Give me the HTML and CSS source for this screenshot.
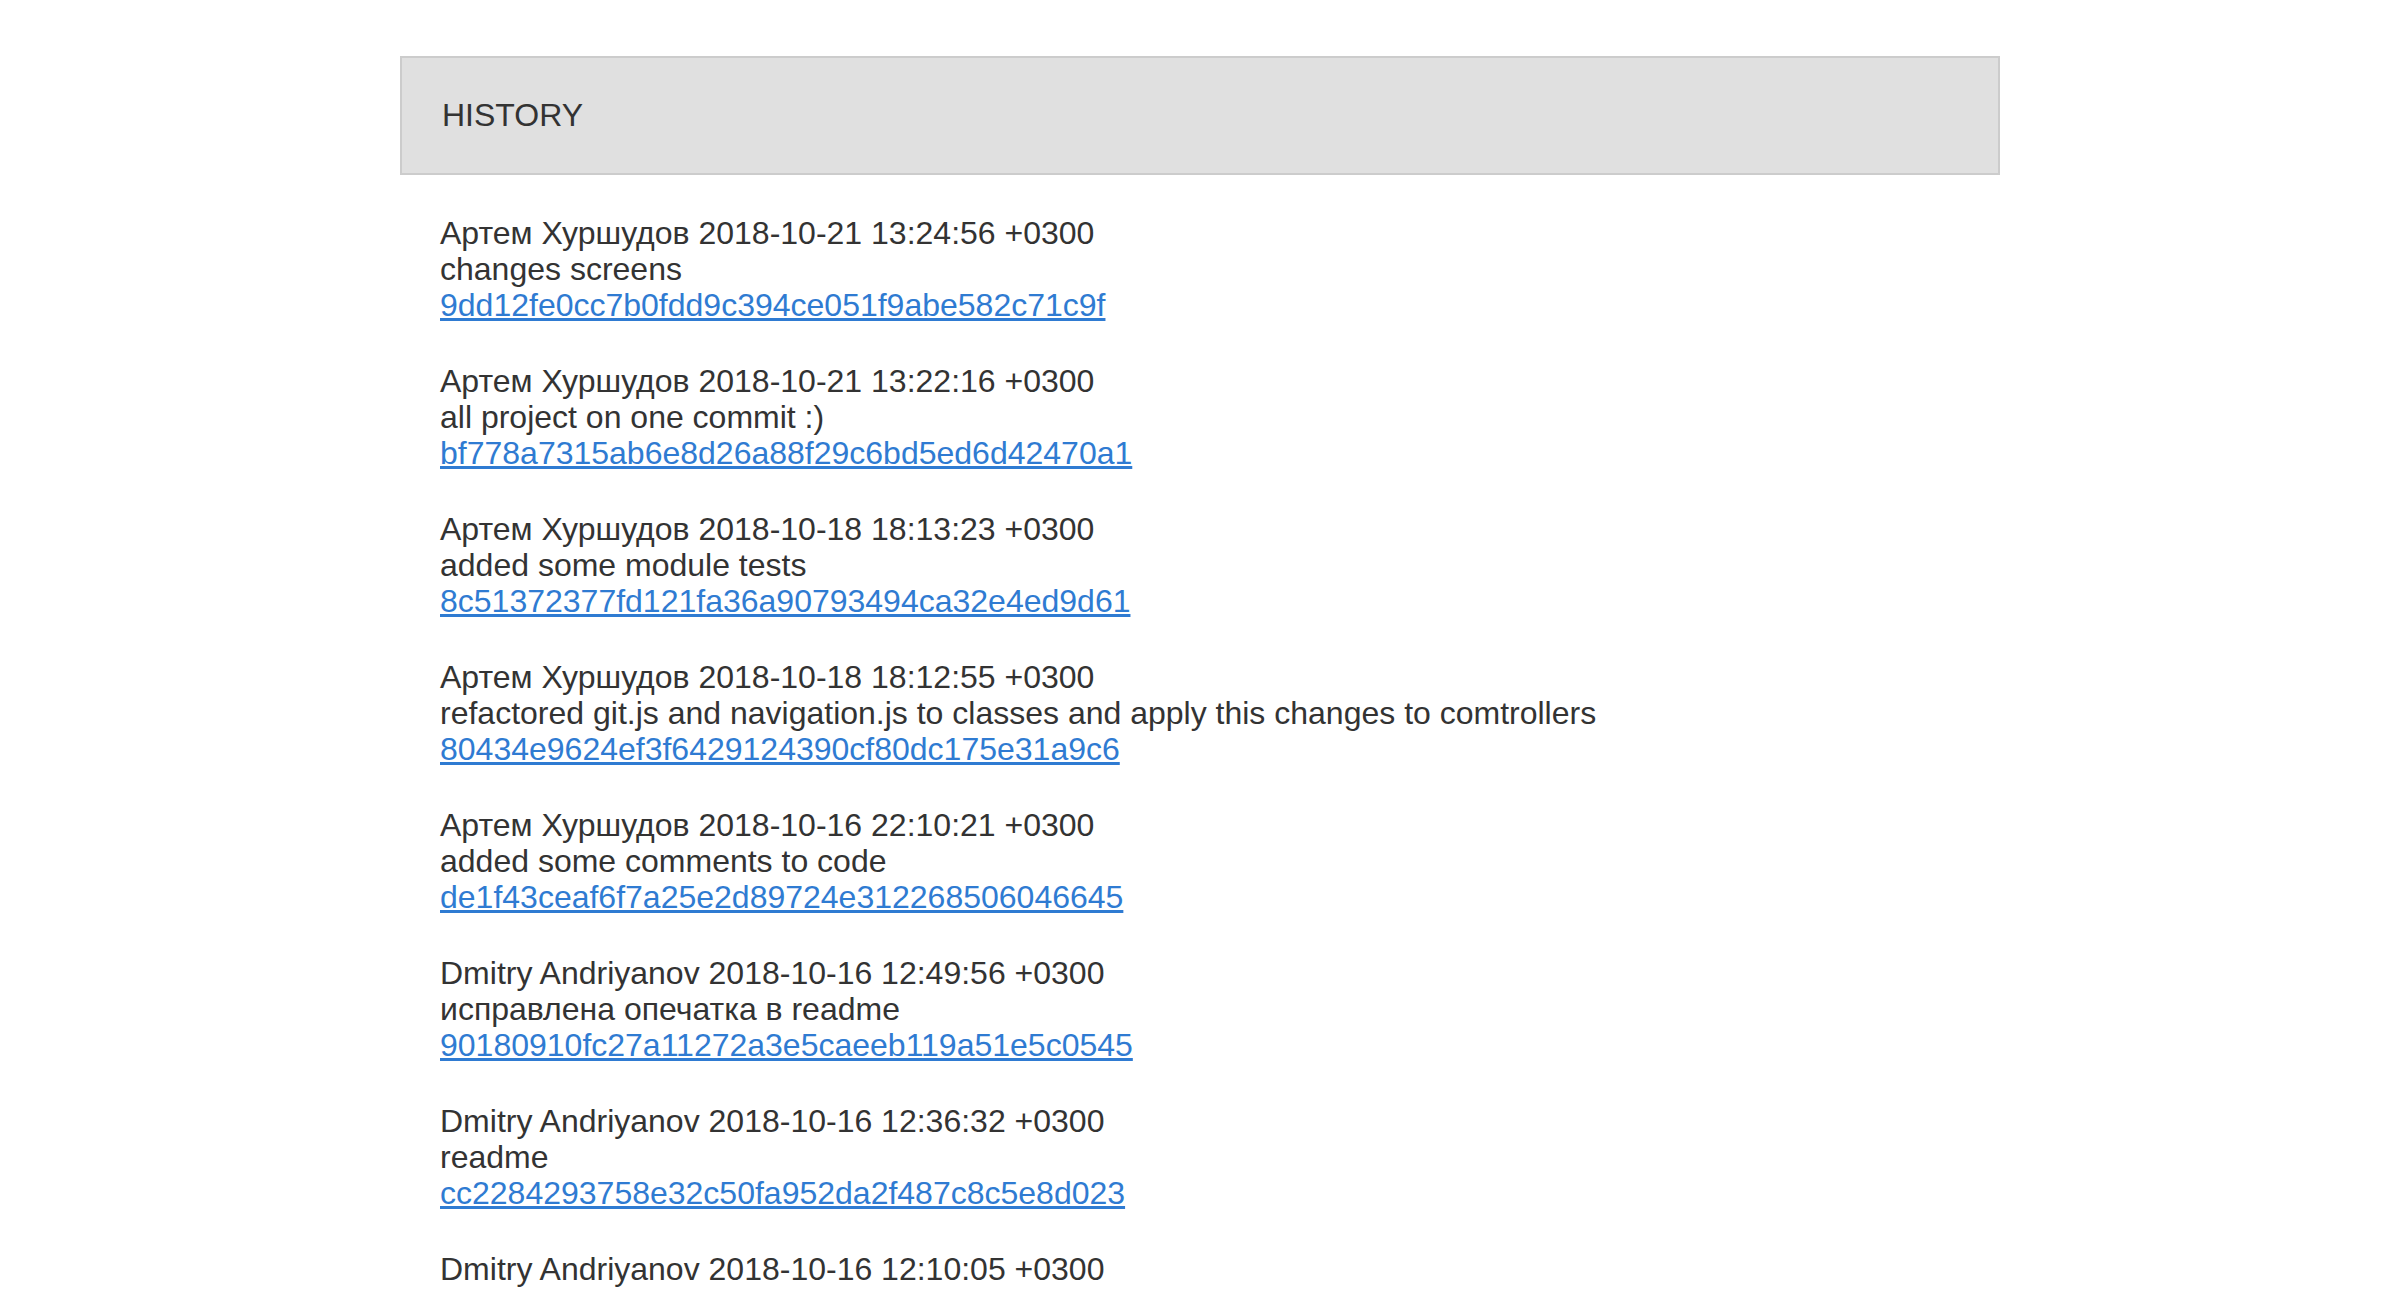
FILE: index.html
```html
<!DOCTYPE html>
<html lang="ru">
<head>
<meta charset="utf-8">
<title>History</title>
<link rel="stylesheet" href="styles.css">
</head>
<body>
<div class="page">
  <div class="header">HISTORY</div>
  <ul class="commits">
    <li class="commit">
      <div class="meta">Артем Хуршудов 2018-10-21 13:24:56 +0300</div>
      <div class="msg">changes screens</div>
      <a class="hash" href="#">9dd12fe0cc7b0fdd9c394ce051f9abe582c71c9f</a>
    </li>
    <li class="commit">
      <div class="meta">Артем Хуршудов 2018-10-21 13:22:16 +0300</div>
      <div class="msg">all project on one commit :)</div>
      <a class="hash" href="#">bf778a7315ab6e8d26a88f29c6bd5ed6d42470a1</a>
    </li>
    <li class="commit">
      <div class="meta">Артем Хуршудов 2018-10-18 18:13:23 +0300</div>
      <div class="msg">added some module tests</div>
      <a class="hash" href="#">8c51372377fd121fa36a90793494ca32e4ed9d61</a>
    </li>
    <li class="commit">
      <div class="meta">Артем Хуршудов 2018-10-18 18:12:55 +0300</div>
      <div class="msg">refactored git.js and navigation.js to classes and apply this changes to comtrollers</div>
      <a class="hash" href="#">80434e9624ef3f6429124390cf80dc175e31a9c6</a>
    </li>
    <li class="commit">
      <div class="meta">Артем Хуршудов 2018-10-16 22:10:21 +0300</div>
      <div class="msg">added some comments to code</div>
      <a class="hash" href="#">de1f43ceaf6f7a25e2d89724e312268506046645</a>
    </li>
    <li class="commit">
      <div class="meta">Dmitry Andriyanov 2018-10-16 12:49:56 +0300</div>
      <div class="msg">исправлена опечатка в readme</div>
      <a class="hash" href="#">90180910fc27a11272a3e5caeeb119a51e5c0545</a>
    </li>
    <li class="commit">
      <div class="meta">Dmitry Andriyanov 2018-10-16 12:36:32 +0300</div>
      <div class="msg">readme</div>
      <a class="hash" href="#">cc2284293758e32c50fa952da2f487c8c5e8d023</a>
    </li>
    <li class="commit">
      <div class="meta">Dmitry Andriyanov 2018-10-16 12:10:05 +0300</div>
    </li>
  </ul>
</div>
</body>
</html>
```

FILE: styles.css
```css
html, body {
  margin: 0;
  padding: 0;
  background: #ffffff;
}

body {
  font-family: "Liberation Sans", Arial, sans-serif;
  color: #333333;
}

.page {
  width: 1600px;
  margin: 56px auto 0;
}

.header {
  box-sizing: border-box;
  height: 119px;
  display: flex;
  align-items: center;
  padding-left: 40px;
  background: #e0e0e0;
  border: 2px solid #cccccc;
  font-size: 32px;
  color: #333333;
}

.commits {
  list-style: none;
  margin: 0;
  padding: 40px 0 0 40px;
  display: flex;
  flex-direction: column;
  gap: 40px;
}

.commit {
  font-size: 32px;
  line-height: 36px;
  display: flex;
  flex-direction: column;
  align-items: flex-start;
}

.hash {
  color: #2f7bd2;
  text-decoration: underline;
}
```
